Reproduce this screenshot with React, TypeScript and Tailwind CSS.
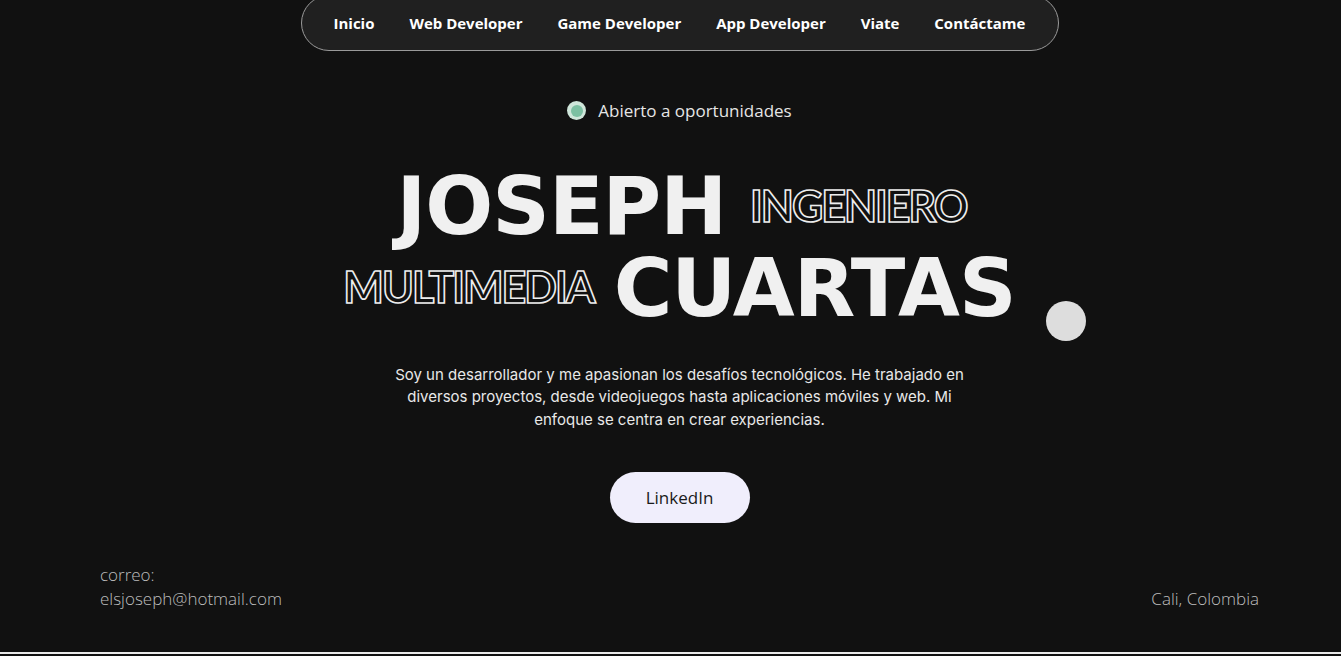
import React from "react";

const big = { fontFamily: '"DejaVu Sans", "Open Sans", sans-serif' };
const outline = { fontFamily: 'Lato, "Liberation Sans", sans-serif' };

export default function App() {
  const links = ["Inicio", "Web Developer", "Game Developer", "App Developer", "Viate", "Contáctame"];
  return (
    <div className="relative min-h-[656px] w-full overflow-hidden bg-[#111111] text-white">
      <div className="w-[1359px]">
        <div className="flex flex-col items-center">
          <nav className="mt-[-5px] flex h-[56px] w-[758px] items-center justify-between rounded-full border border-[#9a9a9a] bg-[#202020] px-[32px] font-['Open_Sans',sans-serif] text-[15px] font-bold text-white">
            {links.map((l) => (
              <span key={l}>{l}</span>
            ))}
          </nav>

          <div className="mt-[47px] flex items-center gap-[12px] font-['Open_Sans',sans-serif] text-[17px] text-[#e6e6e6]">
            <span className="flex h-[19px] w-[19px] items-center justify-center rounded-full bg-[#cfe6da]">
              <span className="h-[12px] w-[12px] rounded-full bg-[#7cc0a2]" />
            </span>
            <span>Abierto a oportunidades</span>
          </div>

          <div className="mt-[43px] flex flex-col items-center leading-none">
            <div className="flex items-center gap-[24px] pl-[4px]">
              <span style={big} className="text-[80px] font-bold tracking-[-1px] text-[#f0f0f0]">JOSEPH</span>
              <span style={outline} className="mb-[3px] text-[43px] font-bold tracking-[-2px] text-[#111] [-webkit-text-stroke:1.6px_#eeeeee]">INGENIERO</span>
            </div>
            <div className="mt-[2px] flex items-center gap-[20px]">
              <span style={outline} className="mb-[4px] text-[43px] font-bold tracking-[-2px] text-[#111] [-webkit-text-stroke:1.6px_#eeeeee]">MULTIMEDIA</span>
              <span style={big} className="text-[80px] font-bold tracking-[-1px] text-[#f0f0f0]">CUARTAS</span>
            </div>
          </div>

          <p className="mt-[35px] w-[580px] text-center font-['Inter',sans-serif] text-[15px] leading-[22.5px] text-[#e8e8e8]">
            Soy un desarrollador y me apasionan los desafíos tecnológicos. He trabajado en diversos proyectos, desde videojuegos hasta aplicaciones móviles y web. Mi enfoque se centra en crear experiencias.
          </p>

          <button className="mt-[41px] flex h-[51px] w-[140px] items-center justify-center rounded-full bg-[#f0eefc] font-['Open_Sans',sans-serif] text-[17px] font-medium text-[#1a1a1a]">
            LinkedIn
          </button>
        </div>

        <div className="mt-[40px] flex items-end justify-between px-[100px] font-['Open_Sans',sans-serif] text-[17px] font-light leading-[24px] text-[#bdbdbd]">
          <div className="flex flex-col">
            <span>correo:</span>
            <span>elsjoseph@hotmail.com</span>
          </div>
          <span>Cali, Colombia</span>
        </div>

        <div className="mt-[41px] border-t-2 border-[#e8e8e8]" />
      </div>

      <div className="absolute left-[1046px] top-[301px] h-[40px] w-[40px] rounded-full bg-[#dddddd]" />
    </div>
  );
}
